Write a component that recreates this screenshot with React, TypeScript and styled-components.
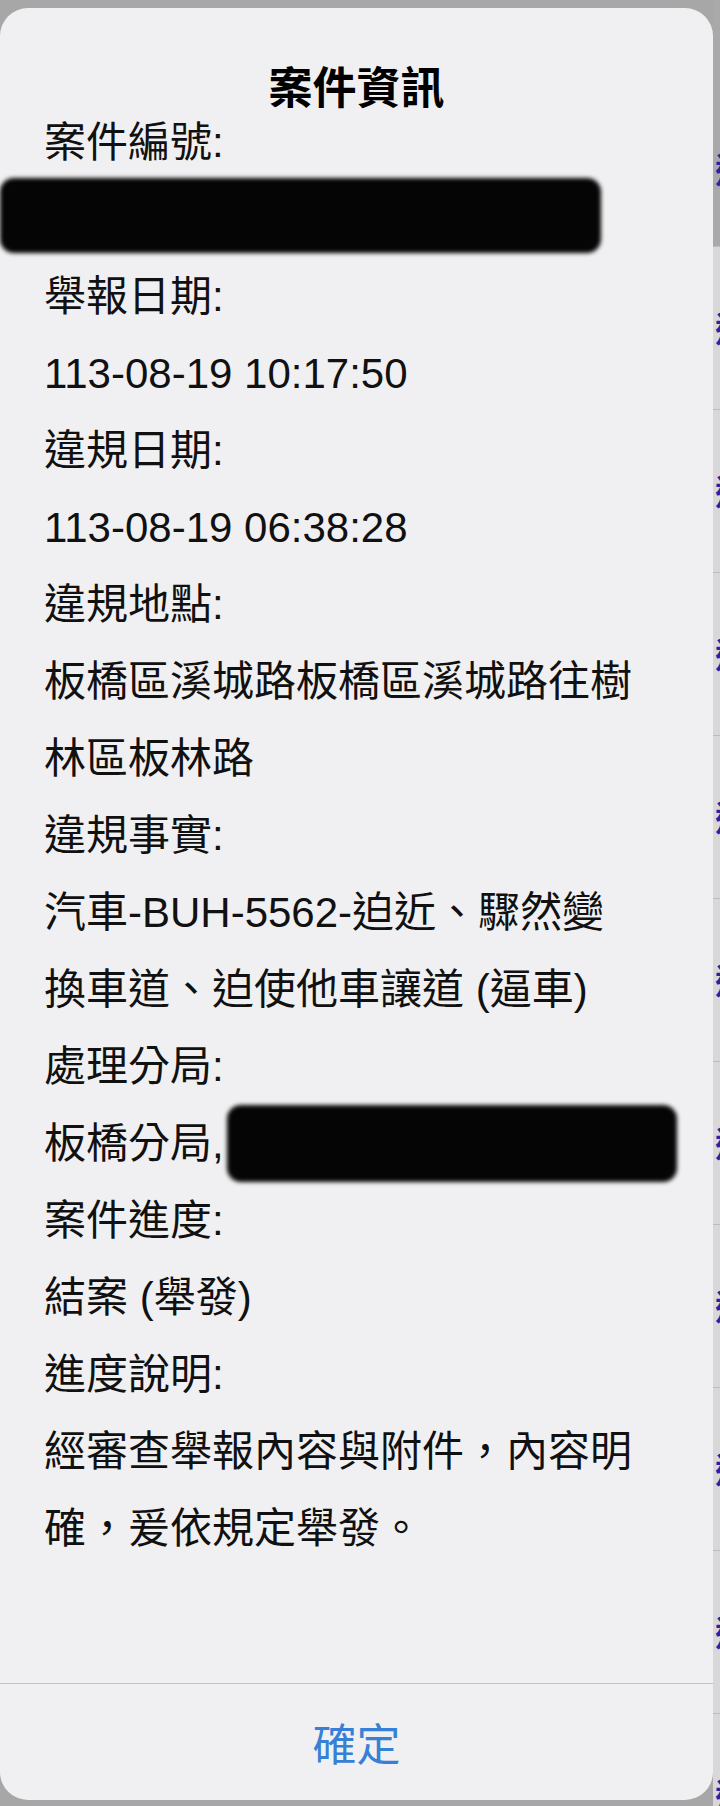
import styled, { createGlobalStyle } from "styled-components";

const GlobalStyle = createGlobalStyle`
  html, body {
    margin: 0;
    padding: 0;
  }
  body {
    background: #a7a7a7;
    font-family: "Liberation Sans", "Noto Sans CJK TC", sans-serif;
  }
`;

const Screen = styled.div`
  width: 720px;
  height: 1806px;
  box-sizing: border-box;
  padding-top: 8px;
  display: flex;
  align-items: flex-start;
  overflow: hidden;
  background: #a7a7a7;
`;

const Card = styled.section`
  width: 713px;
  height: 1792px;
  flex: none;
  display: flex;
  flex-direction: column;
  background: #f0f0f2;
  border-radius: 28px;
  overflow: hidden;
`;

const Title = styled.h1`
  margin: 0 0 -5px;
  padding-top: 61px;
  font-size: 44px;
  line-height: 40px;
  font-weight: 700;
  text-align: center;
  color: #000;
`;

const Body = styled.div`
  flex: 1;
  padding-left: 44px;
`;

const Line = styled.div`
  display: flex;
  align-items: center;
  height: 77px;
  font-size: 42px;
  line-height: 77px;
  white-space: nowrap;
  color: #111;
`;

const Redaction = styled.div<{ $width: number }>`
  width: ${(p) => p.$width}px;
  height: 75px;
  background: #050505;
  border-radius: 14px;
  filter: blur(2px);
`;

const BlockRedaction = styled(Redaction)`
  margin: -3px 0 5px -44px;
`;

const InlineRedaction = styled(Redaction)`
  height: 77px;
  margin-left: 3px;
`;

const Footer = styled.button`
  height: 117px;
  flex: none;
  border: 0;
  border-top: 1px solid #c4c4c6;
  background: transparent;
  font-family: "Liberation Sans", "Noto Sans CJK TC", sans-serif;
  font-size: 44px;
  color: #3680d6;
  padding: 0;
`;

const Strip = styled.div`
  flex: 1;
  align-self: stretch;
  margin-top: -8px;
  display: flex;
  flex-direction: column;
  overflow: hidden;
  background: #d8d8d8;
`;

const StripRow = styled.div<{ $h: number; $pad?: number; $dark?: boolean }>`
  height: ${(p) => p.$h}px;
  box-sizing: border-box;
  padding-top: ${(p) => p.$pad ?? 0}px;
  flex: none;
  display: flex;
  align-items: center;
  border-bottom: 1px solid #bcbcbc;
  background: ${(p) => (p.$dark ? "#a9a9a9" : "#d8d8d8")};
`;

const StripGlyph = styled.span`
  margin-left: 2px;
  font-family: "Noto Sans CJK TC", sans-serif;
  font-size: 34px;
  line-height: 40px;
  font-weight: 700;
  color: #2424a8;
`;

type Item =
  | { kind: "text"; text: string }
  | { kind: "redact" }
  | { kind: "partial"; text: string };

const items: Item[] = [
  { kind: "text", text: "案件編號:" },
  { kind: "redact" },
  { kind: "text", text: "舉報日期:" },
  { kind: "text", text: "113-08-19 10:17:50" },
  { kind: "text", text: "違規日期:" },
  { kind: "text", text: "113-08-19 06:38:28" },
  { kind: "text", text: "違規地點:" },
  { kind: "text", text: "板橋區溪城路板橋區溪城路往樹" },
  { kind: "text", text: "林區板林路" },
  { kind: "text", text: "違規事實:" },
  { kind: "text", text: "汽車-BUH-5562-迫近、驟然變" },
  { kind: "text", text: "換車道、迫使他車讓道 (逼車)" },
  { kind: "text", text: "處理分局:" },
  { kind: "partial", text: "板橋分局," },
  { kind: "text", text: "案件進度:" },
  { kind: "text", text: "結案 (舉發)" },
  { kind: "text", text: "進度說明:" },
  { kind: "text", text: "經審查舉報內容與附件，內容明" },
  { kind: "text", text: "確，爰依規定舉發。" },
];

// rows of the list behind the dialog, seen only in the thin strip on the right
const stripRows = [
  { h: 247, pad: 92, dark: true },
  ...Array.from({ length: 10 }, () => ({ h: 163 })),
];

export default function App() {
  return (
    <>
      <GlobalStyle />
      <Screen>
        <Card>
          <Title>案件資訊</Title>
          <Body>
            {items.map((item, i) => {
              if (item.kind === "redact") return <BlockRedaction key={i} $width={601} />;
              if (item.kind === "partial")
                return (
                  <Line key={i}>
                    {item.text}
                    <InlineRedaction $width={450} />
                  </Line>
                );
              return <Line key={i}>{item.text}</Line>;
            })}
          </Body>
          <Footer>確定</Footer>
        </Card>
        <Strip>
          {stripRows.map((r, i) => (
            <StripRow key={i} $h={r.h} $pad={"pad" in r ? r.pad : 0} $dark={"dark" in r ? r.dark : false}>
              <StripGlyph>違</StripGlyph>
            </StripRow>
          ))}
        </Strip>
      </Screen>
    </>
  );
}
